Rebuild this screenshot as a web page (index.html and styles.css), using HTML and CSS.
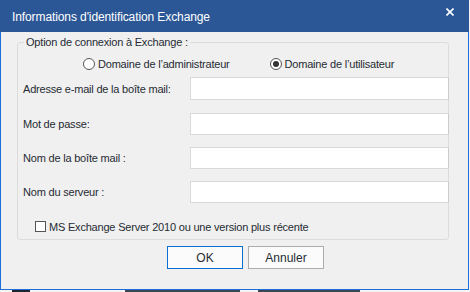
FILE: index.html
```html
<!DOCTYPE html>
<html lang="fr">
  <head>
    <meta charset="UTF-8" />
    <title>Informations d'identification Exchange</title>
    <link rel="stylesheet" href="styles.css">
  </head>
  <body>
    <div class="window">
      <div class="titlebar">
        <span class="title">Informations d'identification Exchange</span>
        <svg class="close" width="8" height="8" viewBox="0 0 8 8">
          <path d="M0.5 0.5 L7.5 7.5 M7.5 0.5 L0.5 7.5" stroke="#fff" stroke-width="1.6" />
        </svg>
      </div>
      <div class="content">
        <fieldset class="group">
          <legend>Option de connexion à Exchange :</legend>
          <div class="radios">
            <label class="radio"><span class="dot"></span>Domaine de l’administrateur</label>
            <label class="radio checked"><span class="dot"></span>Domaine de l’utilisateur</label>
          </div>
          <div class="rows">
            <div class="row first">
              <span class="label">Adresse e-mail de la boîte mail:</span>
              <span class="input"></span>
            </div>
            <div class="row">
              <span class="label">Mot de passe:</span>
              <span class="input"></span>
            </div>
            <div class="row">
              <span class="label">Nom de la boîte mail :</span>
              <span class="input"></span>
            </div>
            <div class="row">
              <span class="label">Nom du serveur :</span>
              <span class="input"></span>
            </div>
          </div>
          <label class="check"><span class="box"></span>MS Exchange Server 2010 ou une version plus récente</label>
        </fieldset>
        <div class="buttons">
          <button class="btn default">OK</button>
          <button class="btn">Annuler</button>
        </div>
      </div>
    </div>
    <div class="behind"></div>
  </body>
</html>
```

FILE: styles.css
```css
body {
  margin: 0;
  padding: 0;
  background-color: #f4f4f4;
  font-family: "Liberation Sans", Arial, sans-serif;
  font-size: 11px;
  letter-spacing: -0.2px;
  color: #262b33;
}
.window {
  width: 467px;
  height: 289px;
  border: 1px solid #1c6fd8;
  border-top: none;
  background-color: #f0f0f0;
}
.titlebar {
  height: 30px;
  margin: 0 -1px;
  background-color: #2b5797;
  display: flex;
  align-items: center;
  padding: 2px 15px 0 12px;
}
.title {
  color: #fff;
  font-size: 12px;
  letter-spacing: -0.1px;
  flex: 1;
}
.close {
  margin-top: -11px;
}
.content {
  padding: 3px 0 0 16px;
}
.group {
  width: 425px;
  margin: 0;
  padding: 0 0 6px 5px;
  border: 1px solid #dcdcdc;
  border-radius: 3px;
  box-sizing: content-box;
}
.group legend {
  padding: 0 2px;
  margin-left: 1px;
  line-height: 14px;
}
.radios {
  display: flex;
  margin-top: 7px;
  padding-left: 60px;
  height: 15px;
  white-space: nowrap;
}
.radio {
  display: flex;
  align-items: center;
  flex-shrink: 0;
  margin-right: 40px;
}
.dot {
  width: 12px;
  height: 12px;
  border: 1px solid #555;
  border-radius: 50%;
  background-color: #fff;
  margin-right: 3px;
  box-sizing: border-box;
  display: flex;
  align-items: center;
  justify-content: center;
}
.checked .dot::after {
  content: "";
  width: 6px;
  height: 6px;
  border-radius: 50%;
  background-color: #333;
}
.rows {
  display: flex;
  flex-direction: column;
  gap: 12px;
  margin-top: 6px;
}
.row {
  display: flex;
  align-items: center;
  height: 22px;
}
.row.first {
  height: 23px;
  margin-bottom: 1px;
}
.label {
  flex: 1;
  white-space: nowrap;
}
.input {
  width: 259px;
  height: 100%;
  box-sizing: border-box;
  margin-right: -1px;
  background-color: #fff;
  border: 1px solid #d9d9d9;
  border-right-color: #cccccc;
}
.check {
  display: flex;
  align-items: center;
  height: 13px;
  margin: 17px 0 0 12px;
}
.box {
  width: 11px;
  height: 11px;
  border: 1px solid #555;
  background-color: #fff;
  box-sizing: border-box;
  margin-right: 3px;
}
.buttons {
  display: flex;
  gap: 5px;
  padding: 6px 0 0 150px;
}
.btn {
  width: 76px;
  height: 23px;
  padding: 0;
  font-family: "Liberation Sans", Arial, sans-serif;
  font-size: 12px;
  color: #262b33;
  background-color: #fbfbfb;
  border: 1px solid #adadad;
}
.btn.default {
  border-color: #0a6fd4;
}
.behind {
  height: 2px;
  background: linear-gradient(90deg, #f4f4f4 0 12px, #1b2533 12px 30px, #f4f4f4 30px 125px, #3a4555 125px 240px, #f4f4f4 240px 258px, #3a4555 258px 360px, #f4f4f4 360px);
}
```
